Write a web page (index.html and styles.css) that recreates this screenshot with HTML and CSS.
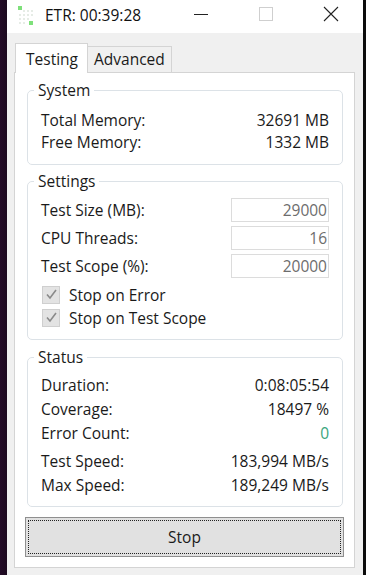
FILE: index.html
```html
<!DOCTYPE html>
<html lang="en">
  <head>
    <meta charset="UTF-8">
    <title>ETR: 00:39:28</title>
    <link rel="stylesheet" href="styles.css">
  </head>
  <body>
    <div class="desk">
      <div class="win">
        <div class="titlebar">
          <svg class="appicon" width="18" height="22" viewBox="0 0 18 22">
            <g fill="#e6ece6">
              <rect x="6" y="6" width="2" height="2"/><rect x="10" y="6" width="2" height="2"/><rect x="14" y="6" width="2" height="2"/>
              <rect x="2" y="10" width="2" height="2"/><rect x="6" y="10" width="2" height="2"/><rect x="10" y="10" width="2" height="2"/><rect x="14" y="10" width="2" height="2"/>
              <rect x="2" y="14" width="2" height="2"/><rect x="6" y="14" width="2" height="2"/><rect x="10" y="14" width="2" height="2"/>
              <rect x="2" y="18" width="2" height="2"/><rect x="6" y="18" width="2" height="2"/>
            </g>
            <rect x="1" y="2" width="4" height="4" fill="#7ee07a"/>
            <rect x="12" y="17" width="4" height="4" fill="#7ee07a"/>
          </svg>
          <span class="wtitle">ETR: 00:39:28</span>
          <div class="ctrls">
            <span class="ctrl"><svg width="16" height="16" viewBox="0 0 16 16"><path d="M1 8.5h14" stroke="#222" stroke-width="1"/></svg></span>
            <span class="ctrl"><svg width="16" height="16" viewBox="0 0 16 16"><rect x="1.5" y="1.5" width="13" height="13" fill="none" stroke="#cfcfcf"/></svg></span>
            <span class="ctrl"><svg width="16" height="16" viewBox="0 0 16 16"><path d="M1 1l14 14M15 1L1 15" stroke="#222" stroke-width="1.1"/></svg></span>
          </div>
        </div>

        <div class="client">
          <div class="tabs">
            <span class="tab active">Testing</span>
            <span class="tab">Advanced</span>
          </div>
          <div class="panel">
            <fieldset class="grp sys">
              <legend>System</legend>
              <div class="row"><span>Total Memory:</span><span>32691 MB</span></div>
              <div class="row"><span>Free Memory:</span><span>1332 MB</span></div>
            </fieldset>

            <fieldset class="grp settings">
              <legend>Settings</legend>
              <div class="frow"><span>Test Size (MB):</span><span class="inp">29000</span></div>
              <div class="frow"><span>CPU Threads:</span><span class="inp">16</span></div>
              <div class="frow"><span>Test Scope (%):</span><span class="inp">20000</span></div>
              <div class="chk first"><span class="box"><svg width="13" height="13" viewBox="0 0 13 13"><path d="M2 6.5l3 3.5 6-8" fill="none" stroke="#8a8a8a" stroke-width="1.6"/></svg></span>Stop on Error</div>
              <div class="chk"><span class="box"><svg width="13" height="13" viewBox="0 0 13 13"><path d="M2 6.5l3 3.5 6-8" fill="none" stroke="#8a8a8a" stroke-width="1.6"/></svg></span>Stop on Test Scope</div>
            </fieldset>

            <fieldset class="grp status">
              <legend>Status</legend>
              <div class="srow"><span>Duration:</span><span>0:08:05:54</span></div>
              <div class="srow"><span>Coverage:</span><span>18497 %</span></div>
              <div class="srow"><span>Error Count:</span><span class="ok">0</span></div>
              <div class="srow gap"><span>Test Speed:</span><span>183,994 MB/s</span></div>
              <div class="srow"><span>Max Speed:</span><span>189,249 MB/s</span></div>
            </fieldset>

            <div class="btn"><span class="focus">Stop</span></div>
          </div>
        </div>
      </div>
    </div>
  </body>
</html>
```

FILE: styles.css
```css
html, body { margin: 0; padding: 0; }
body { background: #1c0a1f; font: 15.5px/22px "Open Sans", "Noto Sans", sans-serif; color: #1a1a1a; }
.desk { display: flex; height: 575px; padding-left: 7px; background: linear-gradient(90deg, #230c27 0, #1c0a1f 7px, #1c0a1f 363px, #0c0c0c 363px); }
.win { width: 356px; height: 575px; background: #f0f0f0; display: flex; flex-direction: column; }

.titlebar { height: 33px; background: #fff; display: flex; align-items: center; }
.appicon { margin-left: 10px; margin-top: -4px; }
.wtitle { margin-left: 10px; font-size: 15.5px; color: #111; margin-top: -3px; }
.ctrls { margin-left: auto; display: flex; height: 33px; }
.ctrl { width: 65px; display: flex; align-items: center; justify-content: center; margin-top: -5px; }

.client { flex: 1; padding: 10px 8px 7px 7px; display: flex; flex-direction: column; }
.tabs { display: flex; align-items: flex-end; height: 29px; padding-left: 1px; position: relative; z-index: 1; }
.tab { border: 1px solid #d4d4d4; border-bottom: none; background: #f0f0f0; height: 25px; line-height: 24px; padding: 0 6px; margin-bottom: 0; }
.tab.active { background: #fff; height: 29px; line-height: 30px; padding: 0 9px 0 10px; margin-bottom: -1px; }
.tab + .tab { border-left: none; }
.panel { flex: 1; background: #fff; border: 1px solid #d4d4d4; padding: 8px 11px 0 12px; display: flex; flex-direction: column; }

.grp { margin: 0; padding: 0 13px 0 13px; border: 1px solid #dce2e7; border-radius: 5px; }
.grp legend { padding: 0 4px; margin-left: -7px; line-height: 18px; }
.row, .srow, .frow { display: flex; justify-content: space-between; }
.sys { padding-top: 10px; padding-bottom: 11px; }
.settings { margin-top: 7px; padding-top: 8px; padding-bottom: 10px; }
.frow { height: 24px; line-height: 24px; margin-bottom: 4px; }
.inp { width: 95px; height: 22px; line-height: 22px; border: 1px solid #dcdcdc; text-align: right; padding-right: 1px; color: #6d6d6d; box-sizing: content-box; }
.chk { display: flex; align-items: center; height: 23px; padding-left: 1px; }
.chk.first { margin-top: 5px; }
.box { width: 16px; height: 16px; border: 1px solid #cfcfcf; background: #e3e3e3; margin-right: 9px; display: flex; align-items: center; justify-content: center; }
.status { margin-top: 8px; padding-top: 7px; padding-bottom: 9px; }
.srow { height: 24px; line-height: 24px; }
.srow.gap { margin-top: 4px; }
.ok { color: #3aa57c; }

.btn { margin: 10px -1px 0 -2px; height: 34px; border: 1px solid #8f8f8f; background: #e1e1e1; padding: 2px; }
.focus { display: flex; height: 100%; box-sizing: border-box; border: 1px dotted #222; align-items: center; justify-content: center; }
```
